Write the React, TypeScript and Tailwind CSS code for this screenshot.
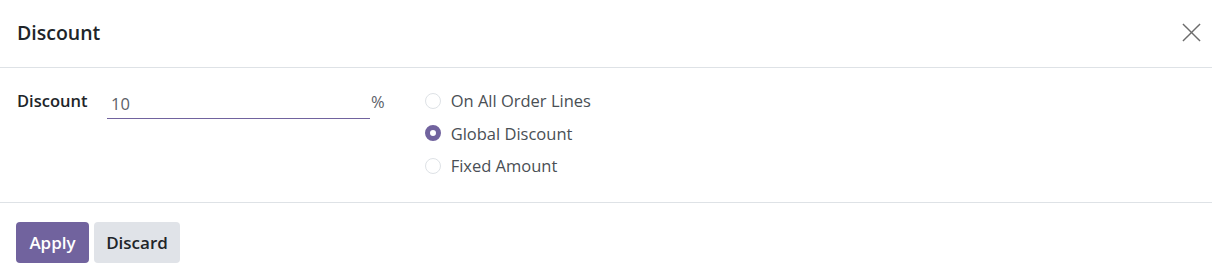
import React, { useState } from 'react'

const options = ['On All Order Lines', 'Global Discount', 'Fixed Amount']

export default function App() {
  const [value, setValue] = useState('10')
  const [choice, setChoice] = useState('Global Discount')

  return (
    <div className="w-[1212px] h-[277px] bg-white text-[#212529] font-['Open_Sans',sans-serif]">
      {/* Header */}
      <div className="h-[68px] flex items-center justify-between pl-[17px] pr-[5px] border-b border-[#dee2e6]">
        <h4 className="text-[19.5px] font-semibold leading-none -mt-[1px]">Discount</h4>
        <button className="w-8 h-8 flex items-center justify-center text-[#6c6c6c] -mt-[2px]">
          <svg className="w-[19px] h-[19px]" viewBox="0 0 20 20" fill="none" stroke="currentColor" strokeWidth={1.5}>
            <line x1="1" y1="1" x2="19" y2="19" />
            <line x1="19" y1="1" x2="1" y2="19" />
          </svg>
        </button>
      </div>

      {/* Body */}
      <div className="h-[135px] flex pl-[17px] pt-[20px] border-b border-[#dee2e6]">
        <label className="w-[90px] pt-[1px] text-[16.5px] font-semibold">Discount</label>
        <div className="flex items-start">
          <input
            value={value}
            onChange={e => setValue(e.target.value)}
            className="w-[263px] h-[31px] px-[4px] text-[16.5px] text-[#5c6168] border-b border-[#71639e] outline-none"
          />
          <span className="ml-[1px] pt-[2px] text-[16.5px] text-[#5c6168]">%</span>
        </div>
        <div className="ml-[40px] flex flex-col gap-[9px] pt-[1px]">
          {options.map(opt => (
            <label key={opt} className="flex items-center gap-[10px] cursor-pointer" onClick={() => setChoice(opt)}>
              {choice === opt ? (
                <span className="w-[16px] h-[16px] rounded-full border-[5px] border-[#71639e] bg-white" />
              ) : (
                <span className="w-[16px] h-[16px] rounded-full border border-[#dee2e6] bg-white" />
              )}
              <span className="text-[16.5px] leading-[23.5px] text-[#4a4f55]">{opt}</span>
            </label>
          ))}
        </div>
      </div>

      {/* Footer */}
      <div className="flex gap-[5px] pl-[16px] pt-[19px]">
        <button className="h-[41px] w-[73px] rounded-[4px] bg-[#71639e] text-white text-[17px] font-semibold">Apply</button>
        <button className="h-[41px] w-[86px] rounded-[4px] bg-[#e0e3e8] text-[#212529] text-[17px] font-semibold">Discard</button>
      </div>
    </div>
  )
}
